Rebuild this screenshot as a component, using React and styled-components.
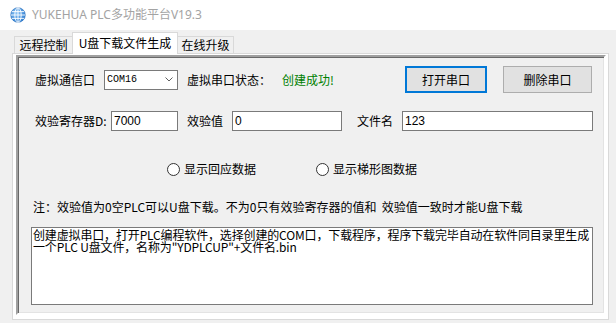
import React from "react";
import styled, { createGlobalStyle } from "styled-components";

const GlobalStyle = createGlobalStyle`
  html, body {
    margin: 0;
    padding: 0;
    background: #f0f0f0;
  }
  #root {
    width: 616px;
    height: 323px;
    overflow: hidden;
  }
`;

const uiFont = `"Noto Sans", "Noto Sans CJK SC", sans-serif`;
const cjkFont = `"Noto Sans CJK SC", sans-serif`;

const Window = styled.div`
  width: 616px;
  height: 323px;
  background: #f0f0f0;
  display: flex;
  flex-direction: column;
  font-family: ${cjkFont};
  color: #000;
`;

const TitleBar = styled.div`
  height: 30px;
  flex: none;
  background: #fff;
  display: flex;
  align-items: center;
  padding-left: 10px;
  box-sizing: border-box;
`;

const Title = styled.span`
  margin-left: 6px;
  font-family: ${uiFont};
  font-size: 12px;
  line-height: 16px;
  color: #a3a3a3;
  white-space: nowrap;
`;

const TabStrip = styled.div`
  height: 23px;
  flex: none;
  display: flex;
  align-items: flex-end;
  padding-left: 14px;
  position: relative;
  z-index: 2;
`;

const Tab = styled.div`
  box-sizing: border-box;
  width: ${(p) => p.$w}px;
  height: ${(p) => (p.$active ? 22 : 17)}px;
  margin-left: ${(p) => (p.$first ? 0 : -1)}px;
  margin-bottom: ${(p) => (p.$active ? -1 : 0)}px;
  border: 1px solid #d9d9d9;
  border-bottom: none;
  background: ${(p) => (p.$active ? "#fff" : "#f0f0f0")};
  font-size: 12px;
  line-height: ${(p) => (p.$active ? 19 : 16)}px;
  text-align: center;
  white-space: nowrap;
  position: relative;
  z-index: ${(p) => (p.$active ? 2 : 1)};
`;

const TabPage = styled.div`
  box-sizing: border-box;
  width: 597px;
  height: 267px;
  margin-left: 12px;
  border: 1px solid #d9d9d9;
  background: #fff;
  padding: 1px 2px 4px 3px;
  display: flex;
`;

const Frame = styled.div`
  flex: 1;
  box-sizing: border-box;
  border: 2px solid;
  border-color: #a0a0a0 #fff #fff #a0a0a0;
  box-shadow: inset 1px 1px 0 #696969, inset -1px -1px 0 #e3e3e3;
  background: #f0f0f0;
  padding: 9px 0 0 13px;
  display: flex;
  flex-direction: column;
`;

const Row = styled.div`
  display: flex;
  align-items: center;
  height: ${(p) => p.$h}px;
  margin-top: ${(p) => p.$mt || 0}px;
  padding-left: ${(p) => p.$pl || 0}px;
`;

const Label = styled.span`
  flex: none;
  width: ${(p) => p.$w}px;
  margin-left: ${(p) => p.$ml || 0}px;
  font-size: 12px;
  line-height: 16px;
  white-space: nowrap;
  color: ${(p) => p.$color || "#000"};
`;

const ComboBox = styled.div`
  flex: none;
  box-sizing: border-box;
  width: 74px;
  height: 20px;
  border: 1px solid #7a7a7a;
  background: #fff;
  display: flex;
  align-items: center;
  justify-content: space-between;
  padding: 0 4px 0 2px;
  font-family: "Liberation Mono", monospace;
  font-size: 10px;
`;

const Button = styled.button`
  flex: none;
  box-sizing: border-box;
  width: ${(p) => p.$w}px;
  height: 27px;
  margin-left: ${(p) => p.$ml || 0}px;
  background: #e1e1e1;
  border: ${(p) => (p.$focused ? "2px solid #0078d7" : "1px solid #adadad")};
  font-family: ${cjkFont};
  font-size: 12px;
  color: #000;
  padding: 0;
`;

const TextBox = styled.div`
  flex: none;
  box-sizing: border-box;
  width: ${(p) => p.$w}px;
  height: 20px;
  border: 1px solid #7a7a7a;
  background: #fff;
  padding-left: 2px;
  font-family: "Liberation Sans", sans-serif;
  font-size: 12px;
  line-height: 18px;
`;

const RadioItem = styled.label`
  flex: none;
  width: 149px;
  display: flex;
  align-items: center;
  gap: 4px;
  font-size: 12px;
  line-height: 16px;
`;

const RadioCircle = styled.span`
  box-sizing: border-box;
  width: 13px;
  height: 13px;
  border: 1px solid #333;
  border-radius: 50%;
  background: #fff;
`;

const Note = styled.div`
  margin-top: 22px;
  padding-left: 2px;
  font-size: 12px;
  line-height: 16px;
  white-space: pre;
`;

const Log = styled.textarea`
  box-sizing: border-box;
  margin-top: 12px;
  width: 562px;
  height: 78px;
  border: 1px solid #7a7a7a;
  background: #fff;
  padding: 1px 1px;
  font-family: ${cjkFont};
  font-size: 12px;
  line-height: 12px;
  letter-spacing: -0.15px;
  resize: none;
  overflow: hidden;
  outline: none;
  color: #000;
`;

const Globe = () => (
  <svg width="16" height="16" viewBox="0 0 16 16">
    <defs>
      <radialGradient id="g" cx="0.4" cy="0.35" r="0.7">
        <stop offset="0" stopColor="#8cc4f5" />
        <stop offset="1" stopColor="#2f7fd3" />
      </radialGradient>
    </defs>
    <circle cx="8" cy="8" r="7.3" fill="url(#g)" stroke="#2a6fba" strokeWidth="0.6" />
    <g stroke="#fff" strokeWidth="0.9" fill="none">
      <ellipse cx="8" cy="8" rx="3.2" ry="7.2" />
      <line x1="8" y1="0.8" x2="8" y2="15.2" />
      <line x1="0.8" y1="8" x2="15.2" y2="8" />
      <path d="M2 4.6h12M2 11.4h12" />
    </g>
  </svg>
);

const Chevron = () => (
  <svg width="8" height="5" viewBox="0 0 8 5">
    <path d="M0.5 0.5L4 4L7.5 0.5" stroke="#606060" strokeWidth="1" fill="none" />
  </svg>
);

const logText =
  "创建虚拟串口，打开PLC编程软件，选择创建的COM口，下载程序，程序下载完毕自动在软件同目录里生成\n一个PLC U盘文件，名称为\"YDPLCUP\"+文件名.bin";

export default function App() {
  return (
    <>
      <GlobalStyle />
      <Window>
        <TitleBar>
          <Globe />
          <Title>YUKEHUA PLC多功能平台V19.3</Title>
        </TitleBar>

        <TabStrip>
          <Tab $w={59} $first>远程控制</Tab>
          <Tab $w={106} $active>U盘下载文件生成</Tab>
          <Tab $w={57}>在线升级</Tab>
        </TabStrip>

        <TabPage>
          <Frame>
            <Row $h={27} $pl={4}>
              <Label $w={69}>虚拟通信口</Label>
              <ComboBox>
                <span>COM16</span>
                <Chevron />
              </ComboBox>
              <Label $w={95} $ml={9}>虚拟串口状态：</Label>
              <Label $w={123} $color="#008000">创建成功!</Label>
              <Button $w={82} $focused>打开串口</Button>
              <Button $w={89} $ml={16}>删除串口</Button>
            </Row>

            <Row $h={20} $mt={18} $pl={4}>
              <Label $w={76}>效验寄存器D:</Label>
              <TextBox $w={67}>7000</TextBox>
              <Label $w={45} $ml={9}>效验值</Label>
              <TextBox $w={110}>0</TextBox>
              <Label $w={45} $ml={15}>文件名</Label>
              <TextBox $w={191}>123</TextBox>
            </Row>

            <Row $h={16} $mt={30} $pl={136}>
              <RadioItem>
                <RadioCircle />
                显示回应数据
              </RadioItem>
              <RadioItem>
                <RadioCircle />
                显示梯形图数据
              </RadioItem>
            </Row>

            <Note>注：效验值为0空PLC可以U盘下载。不为0只有效验寄存器的值和  效验值一致时才能U盘下载</Note>

            <Log readOnly wrap="off" value={logText} />
          </Frame>
        </TabPage>
      </Window>
    </>
  );
}
